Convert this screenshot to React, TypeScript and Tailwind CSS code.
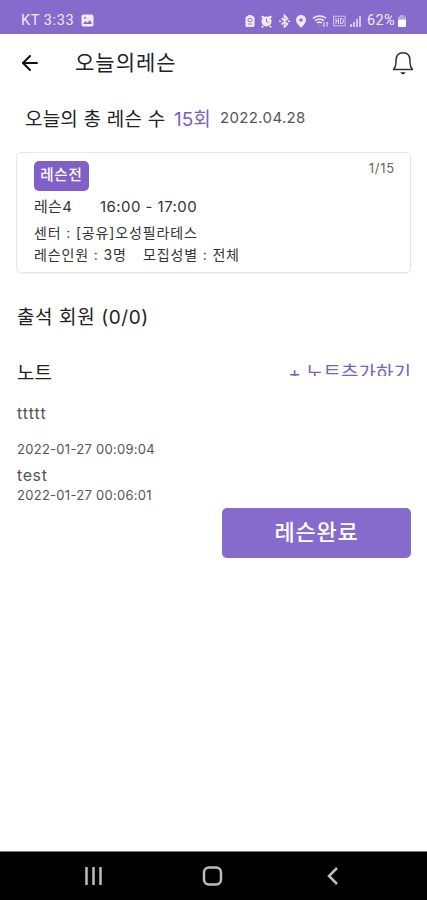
import { ArrowLeft } from 'lucide-react';

const notes = [
  { id: 1, text: 'ttttt', date: '2022-01-27 00:09:04' },
  { id: 2, text: 'test', date: '2022-01-27 00:06:01' },
];

function StatusIcons() {
  return (
    <svg width="112" height="14" viewBox="0 0 112 14" fill="none" stroke="#f1eaff" strokeWidth="1.2">
      {/* battery saver */}
      <path d="M3 1h4v1.200h1q1.500 0 1.500 1.500V11.500q0 1.500-1.500 1.500H2q-1.500 0-1.500-1.500V3.700q0-1.500 1.500-1.500h1z" fill="#f1eaff" stroke="none" />
      <path d="M3 7V6q0-1.500 2-1.500T7 6v1M3.200 7.500h3.600M3 10h4" stroke="#866bcd" strokeWidth="0.900" />
      {/* alarm */}
      <circle cx="21.500" cy="7.500" r="5" fill="#f1eaff" stroke="none" />
      <path d="M16.500 2.500l2.500 1M26.500 2.500l-2.500 1M18 12l-1 1.300M25 12l1 1.300" strokeWidth="2" />
      <path d="M21.500 4.500v3l2 1" stroke="#866bcd" strokeWidth="1" />
      {/* bluetooth */}
      <path d="M36.500 4l6 6-3 3V1.500l3 3-6 6M34 7.300h2M43 7.300h2" strokeWidth="1.600" />
      {/* location */}
      <path d="M56 1a5 5 0 0 0-5 5c0 3.400 5 7.700 5 7.700s5-4.300 5-7.700A5 5 0 0 0 56 1z" fill="#f1eaff" stroke="none" />
      <circle cx="56" cy="6" r="1.700" fill="#866bcd" stroke="none" />
      {/* wifi */}
      <path d="M68 4.300c4-3 9.500-3 13 0M70 6.700c3-2.200 6.500-2.200 9 0M72 9c1.700-1.200 3.300-1.200 5 0M74.500 11.500v.5" strokeWidth="1.500" />
      <path d="M79 8v4.500M77.800 11.200l1.200 1.300M82 12.500V8M83 9.300L82 8" strokeWidth="1" />
      {/* HD voice */}
      <rect x="88.600" y="2.200" width="11.500" height="9.600" strokeWidth="1" opacity="0.700" />
      <path d="M91 4v6M93.500 4v6M91 7h2.500M95.500 4.300v5.400M95.500 4.500h1.300q1.700 0 1.700 2.500t-1.700 2.500h-1.300" strokeWidth="1" opacity="0.850" />
    </svg>
  );
}

function StatusBar() {
  return (
    <div className="flex h-[34px] items-center bg-[#866bcd] pl-[21px] pr-5 pt-[7px] text-[#f1eaff]">
      <span className="w-[55px] whitespace-nowrap font-[Roboto] text-[14.500px] leading-5 tracking-[0.600px]">KT 3:33</span>
      <svg className="ml-[5px]" width="13" height="13" viewBox="0 0 13 13">
        <rect x="0.500" y="0.500" width="12" height="12" rx="2" fill="#f1eaff" />
        <path d="M2 10l2.500-3 2 1.800L9 6l2 4z" fill="#866bcd" />
        <circle cx="4" cy="3.800" r="1" fill="#866bcd" />
      </svg>
      <div className="ml-auto flex items-center">
        <StatusIcons />
        <svg className="-ml-[7px]" width="12" height="14" viewBox="0 0 12 14" fill="#f1eaff">
          <path d="M0 10h2v3H0zM3 8h2v5H3zM6 5h2v8H6zM9 2h2v11H9z" opacity="0.700" />
        </svg>
        <span className="ml-[5px] w-[30px] whitespace-nowrap font-[Roboto] text-[14.500px] leading-5 tracking-[0.400px]">62%</span>
        <svg width="10" height="14" viewBox="0 0 10 14">
          <path d="M3 1h4v1.500h2v3H1v-3h2z" fill="#f1eaff" opacity="0.450" />
          <path d="M1 5.500h8V12q0 1-1 1H2q-1 0-1-1z" fill="#fff" />
        </svg>
      </div>
    </div>
  );
}

function BellIcon() {
  return (
    <svg className="ml-auto" width="22" height="24" viewBox="0 0 22 24" fill="none" stroke="#333" strokeWidth="1.500" strokeLinejoin="round">
      <path d="M1.500 18.500c2-2.200 2.500-4 2.500-7V9.500C4 4.500 6.800 1.700 11 1.700s7 2.800 7 7.800v2c0 3 .5 4.800 2.500 7z" />
      <path d="M8.300 21.300h5.400q-1 2-2.700 2t-2.700-2z" fill="#222" stroke="none" />
    </svg>
  );
}

function LessonCard() {
  return (
    <section className="mx-4 mt-[18px] h-[121px] rounded-[5px] border border-[#e7e7e7] pl-[17px] pr-[15px] pt-2 text-[#333] shadow-[0_1px_1px_#f2f2f2]">
      <div className="flex items-start justify-between">
        <span className="flex h-[30px] w-[55px] items-center justify-center whitespace-nowrap rounded-[5px] bg-[#805fc9] pb-0.5 text-[14.500px] font-medium tracking-[0.900px] text-white">
          레슨전
        </span>
        <span className="-mt-0.5 text-[13px] leading-[18px] tracking-[0.800px] text-[#666]">1/15</span>
      </div>
      <div className="mt-[6px] flex whitespace-nowrap text-[15px] leading-5">
        <span className="w-[66px] tracking-[0.300px]">레슨4</span>
        <span className="tracking-[0.450px]">16:00 - 17:00</span>
      </div>
      <p className="mt-[5px] whitespace-pre text-[14px] leading-[22px] tracking-[0.850px]">센터 : [공유]오성필라테스</p>
      <div className="flex whitespace-pre text-[14px] leading-[22px] tracking-[0.850px]">
        <span className="w-[109px]">레슨인원 : 3명</span>
        <span>모집성별 : 전체</span>
      </div>
    </section>
  );
}

export default function App() {
  return (
    <div className="flex h-[900px] w-[427px] flex-col overflow-hidden bg-white font-[Inter,'Noto_Sans_CJK_KR',sans-serif] text-[#222]">
      <StatusBar />
      <header className="flex h-[57px] items-center pl-[18px] pr-[13px]">
        <ArrowLeft size={24} strokeWidth={2} className="text-[#111]" />
        <h1 className="ml-[33px] text-[21px] leading-7 tracking-[1px]">오늘의레슨</h1>
        <BellIcon />
      </header>

      <main className="flex flex-1 flex-col">
        <div className="mt-[15px] flex h-7 items-center whitespace-nowrap pl-[25px] text-[19px] leading-7">
          <span className="w-[149px] tracking-[0.200px]">오늘의 총 레슨 수</span>
          <span className="w-[46px] text-[#7960c3]">15회</span>
          <span className="pb-1 text-[15px] tracking-[0.350px] text-[#555]">2022.04.28</span>
        </div>

        <LessonCard />

        <h2 className="ml-[17px] mt-[31px] text-[19px] leading-7 tracking-[0.600px]">출석 회원 (0/0)</h2>

        <div className="ml-[17px] mr-4 mt-[28px] flex h-7 items-start justify-between">
          <h2 className="text-[19px] leading-7">노트</h2>
          <button className="flex h-[16px] items-start overflow-hidden whitespace-nowrap text-[19px] leading-[27px] text-[#7960c3]">
            + 노트추가하기
          </button>
        </div>

        <ul className="ml-[17px] text-[#555]">
          {notes.map((note, i) => (
            <li key={note.id} className={i === 0 ? 'mt-[15px]' : 'mt-[6px]'}>
              <p className={i === 0 ? 'h-[36px] text-[16px] leading-5 tracking-[1px]' : 'h-5 text-[16px] leading-5 tracking-[0.600px]'}>
                {note.text}
              </p>
              <p className="text-[13px] leading-5 tracking-[0.280px]">{note.date}</p>
            </li>
          ))}
        </ul>

        <button className="mr-4 mt-[3px] h-[50px] w-[189px] self-end rounded-[5px] bg-[#866bcd] pb-0.5 text-[22px] font-medium tracking-[0.800px] text-white">
          레슨완료
        </button>
      </main>

      <nav className="flex h-[49px] items-center border-t border-[#777] bg-black pl-[84px]">
        <svg width="260" height="22" viewBox="0 0 260 22" fill="none" stroke="#bdbdbd" strokeWidth="2.500">
          <path d="M2.500 2v18M9.500 2v18M16.500 2v18" />
          <rect x="120" y="2.500" width="17" height="17" rx="5" />
          <path d="M253 3l-8 8 8 8" />
        </svg>
      </nav>
    </div>
  );
}
